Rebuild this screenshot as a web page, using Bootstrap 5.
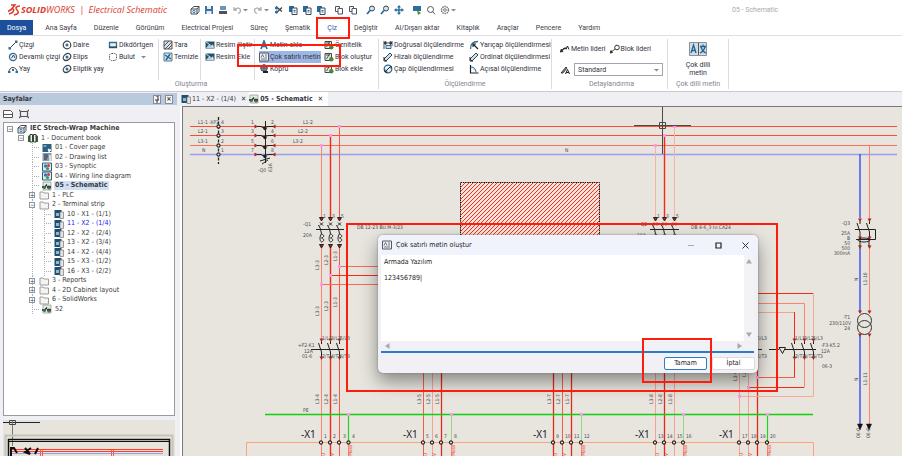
<!DOCTYPE html>
<html lang="tr">
<head>
<meta charset="utf-8">
<meta name="viewport" content="width=device-width, initial-scale=1">
<title>SOLIDWORKS Electrical Schematic</title>
<link href="https://cdn.jsdelivr.net/npm/bootstrap@5.3.0/dist/css/bootstrap.min.css" rel="stylesheet">
<style>
:root{--ui:Roboto,"Noto Sans",sans-serif;--tah:"DejaVu Sans Condensed","DejaVu Sans",sans-serif}
body{font:7px/10px var(--ui);color:#33333e;background:#fff;overflow:hidden}
button,select,textarea{font:inherit;color:inherit}
svg{display:block;flex:none}
.ic{width:10px;height:10px}
.car{width:7px;height:10px}
.titlebar{height:20px;padding:0 8px;position:relative}
.brand{font:italic 9px/18px "Open Sans",sans-serif;color:#dc3a2c;width:169px}
.brand .bar{margin:0 2px}
.qbtn{border:0;background:none;padding:0;line-height:0}
.doc-title{color:#a9a9b2;margin-left:275px}
.menu{height:16px;border-bottom:1px solid #dfdfe3}
.menu .nav-link{padding:3px 0 2px;margin-left:17px;color:#3c3c46;line-height:11px}
.menu .file{background:#1c4f9c;color:#fff;margin:0;padding:3px 7px 2px}
.menu .file+.nav-link{margin-left:12px}
.menu .active{color:#1e5fae}
.ribbon{height:56px;border-bottom:1px solid #c9c9cf}
.rgroup{border-right:1px solid #dcdce0;margin:3px 0 2px}
.rgroup .caption{line-height:9px;color:#85858f;text-align:center}
.rcols{height:41px}
.rcol{display:grid;grid-template-rows:repeat(3,12px);align-content:start;padding-left:4px}
.rcol+.rcol.cut{border-left:1px solid #dcdce0}
.rbtn{display:flex;align-items:center;gap:1px;border:0;background:none;padding:0;white-space:nowrap;text-align:left;line-height:12px}
.rbtn.on{background:#9db7e4;margin-right:1px}
.rbtn.big{line-height:8px;text-align:center}
.w46{width:46px}.w42{width:42px}.w50{width:50px}.w54{width:54px}.w58{width:58px}.w66{width:66px}.w86{width:86px}
.style-select{width:89px;height:13px;border:1px solid #a5a5ad;border-radius:0;background:#fff;padding:0 3px;appearance:none}
.side{width:180px;background:#f0eff3;font-family:var(--tah);color:#3a3a3a}
.side-head{height:12px;background:#b9c9de;margin:1px 3px 0 0;padding-left:3px;font-weight:bold}
.sqbtn{width:8px;height:9px;border:1px solid #858d99;background:#f5f5f5;padding:0;line-height:6px;font-size:7px}
.side-tools{height:17px;padding:0 3px;gap:6px}
.treebox{flex:1 1 0;min-height:0;margin:0 5px 0 3px;border:1px solid #9a9aa2;background:#fff}
.tree{height:190px;display:grid;grid-auto-rows:1fr;margin:1px 0 0;padding:0 0 0 3px;list-style:none;--dots:repeating-linear-gradient(#b0b0b4 0 1px,transparent 1px 2px)}
.tree li{display:flex;align-items:center;gap:3px;white-space:nowrap;min-height:0;line-height:9px}
.tree .l1{padding-left:11px}.tree .l2{padding-left:22px}
.tree .l2,.tree .leaf,.tree .l3{background:var(--dots) 25px 0/1px 100% no-repeat}
.tree .l3{padding-left:37px;background:var(--dots) 25px 0/1px 100% no-repeat,var(--dots) 37px 0/1px 100% no-repeat}
.tree .leaf{padding-left:25px}
.tree .leaf::before,.tree .l3::before{content:"";width:7px;border-top:1px dotted #b0b0b4}
.tree .pm{width:6px;height:6px;border:1px solid #8d96a3;background:#fff;line-height:3px;font-size:6px;text-align:center;margin-right:1px}
.tree .sel{background:#cfe0f6;font-weight:bold;padding:0 1px;margin-left:-1px}
.tree .now{color:#1a1aee}
.preview{height:36px;margin:4px 5px 0 3px;background:#e6e4dd}
.doctabs{height:14px;background:#f0eff3;font-family:var(--tah);padding-left:1px}
.doctabs .tab{display:flex;align-items:center;gap:1px;padding:0 3px 0 0;border:0;background:none}
.doctabs .tab.cur{background:#fff;font-weight:bold;padding-right:5px}
.canvas{flex:1 1 0;min-height:0;border-top:1px solid #77777d;border-left:1px solid #77777d;background:#e7e5de;overflow:hidden;margin-left:2px}
.dlg{left:195px;top:128px;width:380px;border-radius:5px;background:#f1f0f4;box-shadow:0 0 2px #777,0 8px 18px rgba(0,0,0,.42);font-family:var(--tah);color:#222}
.dlg-head{height:20px;padding:0 9px 0 4px;background:#f0f3fc;border-radius:5px 5px 0 0;font-size:7px}
.dlg-edit{margin:0 4px 0 3px;border-bottom:2px solid #2a7dc9}
.dlg-edit textarea{display:block;flex:1;height:86px;border:0;padding:3px;background:#fff;resize:none;line-height:8px;outline:0;overflow:hidden}
.vbar{width:10px;background:#f3f3f5;padding:4px 2px}
.hbar{height:10px;padding:0 12px 0 4px}
.dlg-foot{height:20px;padding:0 3px;gap:5px}
.dbtn{width:43px;height:13px;border:1px solid #dcdce0;border-radius:2px;background:#fff;padding:0;line-height:10px}
.dbtn.main{border-color:#2a7dc9}
.callout{position:absolute;border:2px solid #ff1c0c;pointer-events:none}
.c-tab{left:316px;top:17px;width:34px;height:22px}
.c-cmd{left:237px;top:44px;width:104px;height:23px}
.c-dlg{left:346px;top:223px;width:432px;height:169px}
.c-ok{left:642px;top:338px;width:70px;height:45px}
.sch text{font-family:var(--tah);font-size:5px;fill:#4a4a50}
.sch .x1{font:10px "Noto Sans",sans-serif;fill:#222}
.sch .rd text{fill:#f0402c}
</style>
<script src="https://cdn.jsdelivr.net/npm/bootstrap@5.3.0/dist/js/bootstrap.bundle.min.js"></script>
</head>
<body class="vh-100 d-flex flex-column position-relative">

<svg width="0" height="0" class="position-absolute" aria-hidden="true">
<defs>
<g id="cube" fill="none" stroke="#454c57"><path d="M1 4l3-2.500h5v5l-2 2.500M1 4h6v5H1zM7 4l2-2.500"/><circle cx="4" cy="6.500" r="1.200" stroke="#2a78b0"/></g>
<g id="save"><path d="M1 1h8v8H1z" fill="#3a729c"/><path d="M3 1h4v3H3zM2.500 6h5v3h-5z" fill="#e8eef3"/></g>
<g id="prn"><path d="M2 1h6v4H2z" fill="#6f95b5"/><path d="M1 6h8v3H1z" fill="#4a5260"/></g>
<g id="undo"><path d="M2 2v3h3M2.500 4.500C5 2 8.500 3 8.500 5.500 8.500 7 7.500 8 6 8.500" fill="none" stroke="#a9adb5" stroke-width="1.300"/></g>
<g id="caret"><path d="M1 4h5L3.500 6.500z" fill="#8a8a90"/></g>
<g id="cut"><path d="M2 1.500l6 5M2 8l6-5.500" stroke="#444" stroke-width="1.300"/><circle cx="2.500" cy="3" r="1.600" fill="#256b9f"/><circle cx="2.500" cy="7" r="1.600" fill="#256b9f"/></g>
<g id="copy"><path d="M1 1h5v6H1z" fill="#256b9f"/><path d="M4 3h5v6.500H4z" fill="#fff" stroke="#3d4756"/><path d="M5.500 5.500h2M5.500 7h2" stroke="#256b9f"/></g>
<g id="page2" fill="none" stroke="#4d5561"><path d="M1.500 1.500h4v5h-4z"/><path d="M4 3.500h4.500v5.500H4z" fill="#fff"/></g>
<g id="find"><circle cx="6" cy="3.500" r="2.500" fill="#d5e3ee" stroke="#345"/><path d="M4 5.500L1 9" stroke="#256b9f" stroke-width="1.800"/></g>
<g id="pan"><path d="M5 0l2 2.500H5.700V4.300H7.500V3L10 5 7.500 7V5.700H5.700V7.500H7L5 10 3 7.500h1.300V5.700H2.500V7L0 5l2.500-2v1.300h1.800V2.500H3z" fill="#2b6f9d"/></g>
<g id="screen"><path d="M1 1h8v5H1z" fill="#2b6f9d"/><path d="M5 5l4 3-3 2z" fill="#4b8f3c"/></g>
<g id="lens" fill="none" stroke="#555"><circle cx="4.500" cy="4.500" r="3"/><path d="M6.800 6.800L9 9.300"/></g>
<g id="gear" fill="none" stroke="#777"><circle cx="5" cy="5" r="3.500" stroke-dasharray="1.500 .7" stroke-width="1.500"/><circle cx="5" cy="5" r="1.300"/></g>
<g id="line"><path d="M2 8L8 2" stroke="#444"/><path d="M0.500 7h2.500v2.500H.5zM7 .5h2.500V3H7z" fill="#2b6f9d"/></g>
<g id="poly"><circle cx="5" cy="5" r="3.600" fill="#e9f1f7" stroke="#2b6f9d" stroke-width="1.200"/><path d="M3.500 6l2-3 1.500 3" fill="none" stroke="#444"/></g>
<g id="arc"><path d="M1 8a4 4.500 0 0 1 8 0" fill="none" stroke="#444"/><path d="M0 7h2.500v2H0zM7.500 7H10v2H7.500zM4 5h2v2H4z" fill="#2b6f9d"/></g>
<g id="circ"><circle cx="5" cy="5" r="3.800" fill="none" stroke="#3a4552" stroke-width="1.200"/><circle cx="5" cy="5" r="1.500" fill="#2b6f9d"/></g>
<g id="ell"><ellipse cx="5" cy="5" rx="4" ry="3" transform="rotate(-35 5 5)" fill="none" stroke="#3a4552" stroke-width="1.200"/><circle cx="5" cy="5" r="1.500" fill="#2b6f9d"/></g>
<g id="rect"><path d="M1.500 2.500h7v5h-7z" fill="#e9f1f7" stroke="#2b6f9d" stroke-width="1.300"/><path d="M1 7h8" stroke="#333"/></g>
<g id="cloud"><rect x="1.500" y="1.500" width="7" height="7" rx="2" fill="none" stroke="#555" stroke-dasharray="1.500 .8"/></g>
<g id="hatch"><path d="M1 1h8v8H1z" fill="#dde1e6" stroke="#4a525c"/><path d="M1 6l5-5M2 9l7-7M5 9l4-4" stroke="#4a525c"/></g>
<g id="clean"><path d="M1 1h8v8H1z" fill="#cfe0ec" stroke="#5c7890"/><path d="M2 3l6 4M3 8l4-6" stroke="#256b9f" stroke-width="1.500"/></g>
<g id="img"><path d="M0.500 1.500h9v7h-9z" fill="#24516f"/><path d="M1 8l3-3.500 2 2L8 4l1 4z" fill="#b9d3e4"/><path d="M1 2l7 5" stroke="#fff" stroke-width=".8"/></g>
<g id="ta"><path d="M2 9L5 1l3 8M3 6.500h4" fill="none" stroke="#2b6f9d" stroke-width="1.700"/></g>
<g id="mt"><path d="M.5 1h9v8h-9z" fill="#eceef2" stroke="#555c68"/><path d="M2 5.500L3.500 2.500 5 5.500M6 3h2M6 5h2M2 7h6" fill="none" stroke="#555c68" stroke-width=".8"/></g>
<g id="link"><circle cx="5" cy="4" r="3.300" fill="#8b9ba8" stroke="#35424d"/><path d="M2 4h6M5 1v6" stroke="#35424d" stroke-width=".7"/><path d="M4 8h5" stroke="#222" stroke-width="2"/></g>
<g id="blk"><path d="M1 1.500h6.500v7H1z" fill="#e3e6e2" stroke="#3f4a44"/><path d="M2.500 7l3-5M2 3h4" stroke="#333" stroke-width=".8"/><circle cx="7.300" cy="7.300" r="2.200" fill="#3f8b3a"/></g>
<g id="dim"><path d="M1 1v8M9 1v5M1 3h8M1 3l2-1.500v3zM9 3L7 1.500v3z" fill="#333" stroke="#333" stroke-width=".9"/><path d="M3 5.500h5v3H3z" fill="#cfe0ec" stroke="#2b6f9d"/></g>
<g id="dim2"><path d="M1 7l6-6 2 2-6 6z" fill="#cfe0ec" stroke="#2f4558"/><path d="M1 5v4h3" fill="none" stroke="#222"/></g>
<g id="dia"><circle cx="5" cy="5" r="3.800" fill="#e9f1f7" stroke="#2b6f9d" stroke-width="1.300"/><path d="M2 8l6-6M2 8V5.500M2 8h2.500M8 2v2.500" stroke="#222" fill="none"/></g>
<g id="rad"><path d="M1.500 9C1.500 4 4 1.500 9 1.500" fill="none" stroke="#2b6f9d" stroke-width="1.300"/><path d="M9 9L4 4M4 7V4h3" fill="none" stroke="#222" stroke-width="1.200"/></g>
<g id="ang"><path d="M1.500 1v8H9.500" fill="none" stroke="#222" stroke-width="1.200"/><path d="M2 3c3 0 5 2 5 5.500" fill="#cfe0ec" stroke="#2b6f9d"/></g>
<g id="ldr"><path d="M1 7l3-3h3M0 8l3-.5L1.500 5z" fill="#222" stroke="#222" stroke-width=".8"/><path d="M6 5.500L7.500 2 9 5.500" fill="none" stroke="#222"/></g>
<g id="bld"><circle cx="7" cy="3.500" r="2.300" fill="none" stroke="#333"/><path d="M0 9l5-4M0 9l2.500-.5L1 6.500z" fill="#222" stroke="#222" stroke-width=".8"/></g>
<g id="sty"><path d="M1 8l5-6 1 1-4 5z" fill="#7e8d99" stroke="#222" stroke-width=".8"/><path d="M5.500 9L7.500 4.500 9.500 9M6 7.500h3" fill="none" stroke="#222"/></g>
<g id="book"><path d="M0 3l2-1v7H0zM10 3L8 2v7h2z" fill="#2f6b37"/><path d="M2 1.500h2.500v7.500H2zM5.500 1.500H8v7.500H5.500z" fill="#f1f1ee" stroke="#3a3f3a"/></g>
<g id="cov"><path d="M.5 1h9v8h-9z" fill="#2a6080"/><path d="M1.500 3h3M6 6l3 1-2 2z" stroke="#fff" fill="#fff" stroke-width=".8"/></g>
<g id="lst"><path d="M.5 1h9v8h-9z" fill="#8a9aa8"/><path d="M2 3h4M2 5h4M2 7h3" stroke="#234"/><path d="M7 3h2v6H7z" fill="#ddd"/></g>
<g id="syn"><path d="M.5 1h9v8h-9z" fill="#dfeaf0" stroke="#2a6080"/><circle cx="3.500" cy="4" r="1.700" fill="#2b7fb8"/><circle cx="6.500" cy="3.500" r="1.500" fill="#d33"/><circle cx="5.500" cy="6.500" r="1.600" fill="#3a9a4a"/></g>
<g id="sc"><path d="M1 1h8v8H1z" fill="#e5e8e5" stroke="#8a8f8a" stroke-width=".7"/><path d="M0 6h3l2-2.500M5 6h4" stroke="#222" stroke-width="1.300" fill="none"/><circle cx="2.500" cy="6.500" r="1.500" fill="#2c7c46"/><circle cx="7" cy="6.500" r="1.500" fill="none" stroke="#1f4632"/></g>
<g id="tm"><path d="M.5 1h7v8h-7z" fill="#1f4f70"/><path d="M2 4h3v3H2z" fill="#8db9d3"/><path d="M6 3h3.500v6.500H6z" fill="#e3e3e0" stroke="#777" stroke-width=".7"/></g>
<g id="fold"><path d="M1 2h3l1 1h4.500v6H1z" fill="#f4f4f2" stroke="#9c9ca0"/></g>
<!-- schematic parts -->
<g id="pin"><path d="M-2-1.500h4L0 2z" fill="#b82018"/></g>
<g id="pole" fill="none" stroke="#222"><path d="M-1.500 4.500l3 3M1.500 4.500l-3 3M-3 7l2 4 1 5M0 16c3 1 3 3 0 4 3 1 3 3 0 4M0 24c-2-1-2-6 0-8" stroke-width="1"/><use href="#pin" y="1"/><use href="#pin" y="28"/></g>
<g id="kpole"><path d="M0 1v3M-3 3l3 9v6" fill="none" stroke="#222"/><use href="#pin"/><use href="#pin" y="18"/></g>
<g id="term"><circle r="1.600" fill="#e7e5de" stroke="#222" stroke-width="1.100"/></g>
<g id="tie"><path d="M-1.500-1.500h3v3h-3z" fill="#f79af0"/></g>
<g id="hp"><use href="#pin" transform="translate(-9) rotate(-90)"/><use href="#pin" transform="translate(9) rotate(90)"/><path d="M-8 0h4l5 3M8 0H4L-2 1" fill="none" stroke="#222"/><circle cy="2" r="1.700" fill="#222"/></g>
<pattern id="diag" width="4" height="4" patternUnits="userSpaceOnUse"><rect width="4" height="4" fill="#f7e3dc"/><path d="M-1 5L5-1M-1 1l2-2M3 5l2-2" stroke="#f5301c" stroke-width="1"/></pattern>
</defs>
</svg>

<header class="titlebar d-flex align-items-center">
  <svg width="13" height="15" viewBox="0 0 13 15" aria-hidden="true"><path d="M3 2h4L4 5.500C7 6 6 10 1 11M0 8.500L4 6M12 3C8 3 7 5 9 7s2 4-3 5" fill="none" stroke="#dc3a2c" stroke-width="1.500"/></svg>
  <div class="brand text-nowrap"><b>SOLID</b>WORKS<span class="bar"> | </span>Electrical Schematic</div>
  <div class="d-flex align-items-center gap-1">
    <button class="qbtn" aria-label="Proje"><svg class="ic"><use href="#cube"/></svg></button>
    <button class="qbtn" aria-label="Kaydet"><svg class="ic"><use href="#save"/></svg></button>
    <button class="qbtn" aria-label="Yazdır"><svg class="ic"><use href="#prn"/></svg></button>
    <button class="qbtn d-flex" aria-label="Geri al"><svg class="ic"><use href="#undo"/></svg><svg class="car"><use href="#caret"/></svg></button>
    <button class="qbtn d-flex" aria-label="Yinele"><svg class="ic" viewBox="-10 0 10 10"><use href="#undo" transform="scale(-1 1)"/></svg><svg class="car"><use href="#caret"/></svg></button>
    <button class="qbtn" aria-label="Kes"><svg class="ic"><use href="#cut"/></svg></button>
    <button class="qbtn" aria-label="Kopyala"><svg class="ic"><use href="#copy"/></svg></button>
    <button class="qbtn" aria-label="Çoklu kopyala"><svg class="ic"><use href="#copy"/></svg></button>
    <button class="qbtn" aria-label="Yapıştır"><svg class="ic"><use href="#copy"/></svg></button>
    <button class="qbtn ms-1" aria-label="Özel yapıştır"><svg class="ic"><use href="#page2"/></svg></button>
    <button class="qbtn" aria-label="Taşı"><svg class="ic"><use href="#page2"/></svg></button>
    <button class="qbtn ms-1" aria-label="Bul"><svg class="ic"><use href="#find"/></svg></button>
    <button class="qbtn" aria-label="Değiştir"><svg class="ic"><use href="#find"/></svg></button>
    <button class="qbtn" aria-label="Kaydır"><svg class="ic"><use href="#pan"/></svg></button>
    <button class="qbtn ms-1" aria-label="Ekran"><svg class="ic"><use href="#screen"/></svg></button>
    <button class="qbtn" aria-label="Yakınlaştır"><svg class="ic"><use href="#lens"/></svg></button>
    <button class="qbtn d-flex" aria-label="Ayarlar"><svg class="ic"><use href="#gear"/></svg><svg class="car"><use href="#caret"/></svg></button>
  </div>
  <div class="doc-title text-nowrap">05 - Schematic</div>
</header>

<nav class="menu d-flex text-nowrap" aria-label="Menü">
  <a class="nav-link file" href="#">Dosya</a><a class="nav-link" href="#">Ana Sayfa</a><a class="nav-link" href="#">Düzenle</a><a class="nav-link" href="#">Görünüm</a><a class="nav-link" href="#">Electrical Projesi</a><a class="nav-link" href="#">Süreç</a><a class="nav-link" href="#">Şematik</a><a class="nav-link active" href="#">Çiz</a><a class="nav-link" href="#">Değiştir</a><a class="nav-link" href="#">Al/Dışarı aktar</a><a class="nav-link" href="#">Kitaplık</a><a class="nav-link" href="#">Araçlar</a><a class="nav-link" href="#">Pencere</a><a class="nav-link" href="#">Yardım</a>
</nav>

<section class="ribbon d-flex">
  <div class="rgroup ps-1">
    <div class="rcols d-flex">
      <div class="rcol w54 ps-0 ms-1"><button class="rbtn"><svg class="ic"><use href="#line"/></svg>Çizgi</button><button class="rbtn"><svg class="ic"><use href="#poly"/></svg>Devamlı çizgi</button><button class="rbtn"><svg class="ic"><use href="#arc"/></svg>Yay</button></div>
      <div class="rcol w46 ps-0"><button class="rbtn"><svg class="ic"><use href="#circ"/></svg>Daire</button><button class="rbtn"><svg class="ic"><use href="#ell"/></svg>Elips</button><button class="rbtn"><svg class="ic"><use href="#ell"/></svg>Eliptik yay</button></div>
      <div class="rcol w50 ps-0"><button class="rbtn"><svg class="ic"><use href="#rect"/></svg>Dikdörtgen</button><button class="rbtn"><svg class="ic"><use href="#cloud"/></svg>Bulut<svg class="car ms-1"><use href="#caret"/></svg></button></div>
      <div class="rcol w42 cut"><button class="rbtn"><svg class="ic"><use href="#hatch"/></svg>Tara</button><button class="rbtn"><svg class="ic"><use href="#clean"/></svg>Temizle</button></div>
      <div class="rcol w54 cut"><button class="rbtn"><svg class="ic"><use href="#img"/></svg>Resim iliştir</button><button class="rbtn"><svg class="ic"><use href="#img"/></svg>Resim Ekle</button></div>
      <div class="rcol w66 cut"><button class="rbtn"><svg class="ic"><use href="#ta"/></svg>Metin ekle</button><button class="rbtn on"><svg class="ic"><use href="#mt"/></svg>Çok satırlı metin</button><button class="rbtn"><svg class="ic"><use href="#link"/></svg>Köprü</button></div>
      <div class="rcol w58"><button class="rbtn"><svg class="ic"><use href="#blk"/></svg>Öznitelik</button><button class="rbtn"><svg class="ic"><use href="#blk"/></svg>Blok oluştur</button><button class="rbtn"><svg class="ic"><use href="#blk"/></svg>Blok ekle</button></div>
    </div>
    <div class="caption">Oluşturma</div>
  </div>
  <div class="rgroup">
    <div class="rcols d-flex">
      <div class="rcol w86"><button class="rbtn"><svg class="ic"><use href="#dim"/></svg>Doğrusal ölçülendirme</button><button class="rbtn"><svg class="ic"><use href="#dim2"/></svg>Hizalı ölçülendirme</button><button class="rbtn"><svg class="ic"><use href="#dia"/></svg>Çap ölçülendirmesi</button></div>
      <div class="rcol w86"><button class="rbtn"><svg class="ic"><use href="#rad"/></svg>Yarıçap ölçülendirmesi</button><button class="rbtn"><svg class="ic"><use href="#dim2"/></svg>Ordinat ölçülendirmesi</button><button class="rbtn"><svg class="ic"><use href="#ang"/></svg>Açısal ölçülendirme</button></div>
    </div>
    <div class="caption">Ölçülendirme</div>
  </div>
  <div class="rgroup ps-2 pe-1">
    <div class="rcols d-flex flex-column justify-content-center gap-2">
      <div class="d-flex gap-1"><button class="rbtn"><svg class="ic"><use href="#ldr"/></svg>Metin lideri</button><button class="rbtn"><svg class="ic"><use href="#bld"/></svg>Blok lideri</button></div>
      <div class="d-flex align-items-center gap-1 position-relative"><svg class="ic"><use href="#sty"/></svg><select class="style-select" aria-label="Ölçü stili"><option>Standard</option></select><svg class="ic position-absolute end-0"><use href="#caret"/></svg></div>
    </div>
    <div class="caption">Detaylandırma</div>
  </div>
  <div class="rgroup px-2">
    <div class="rcols d-flex justify-content-center"><button class="rbtn big flex-column justify-content-center"><svg width="18" height="14" viewBox="0 0 18 14"><path d="M.5.5h17v13H.5z" fill="#d3dbe4" stroke="#8a9099"/><path d="M9.500 1v12" stroke="#555"/><path d="M2 11l2.500-8L7 11M3 8.500h3.500M11 4.500h6M14 2.500v2M12 5c1 3 2 5 5 6M16 5c-1 3-2 5-5 6" fill="none" stroke="#1f6496" stroke-width="1.300"/></svg><span class="mt-1">Çok dilli<br>metin</span></button></div>
    <div class="caption">Çok dilli metin</div>
  </div>
</section>

<div class="d-flex flex-grow-1" style="min-height:0">
  <aside class="side d-flex flex-column flex-shrink-0">
    <div class="side-head d-flex align-items-center"><span class="me-auto">Sayfalar</span><button class="sqbtn me-1" aria-label="Sabitle"><svg width="6" height="7"><path d="M1 4h4M2 0h2v4M3 4v3" stroke="#333" fill="none"/></svg></button><button class="sqbtn me-1" aria-label="Kapat">×</button></div>
    <div class="side-tools d-flex align-items-center"><button class="qbtn" aria-label="Sayfa"><svg class="ic"><path d="M.5 1.500h7l2 2v5h-9zM0 5.500h10" fill="#fff" stroke="#555"/></svg></button><button class="qbtn" aria-label="Kırp"><svg class="ic"><path d="M1.500 2.500h7v5h-7zM0 1l1.500 1.500M10 1L8.500 2.500M0 9l1.500-1.500M10 9L8.500 7.500" fill="none" stroke="#555" stroke-width="1.200"/></svg></button></div>
    <div class="treebox">
      <ul class="tree">
        <li><span class="pm">−</span><svg class="ic"><use href="#cube"/></svg><b>IEC Strech-Wrap Machine</b></li>
        <li class="l1"><span class="pm">−</span><svg class="ic"><use href="#book"/></svg>1 - Document book</li>
        <li class="leaf"><svg class="ic"><use href="#cov"/></svg>01 - Cover page</li>
        <li class="leaf"><svg class="ic"><use href="#lst"/></svg>02 - Drawing list</li>
        <li class="leaf"><svg class="ic"><use href="#syn"/></svg>03 - Synoptic</li>
        <li class="leaf"><svg class="ic"><use href="#syn"/></svg>04 - Wiring line diagram</li>
        <li class="leaf"><svg class="ic"><use href="#sc"/></svg><span class="sel">05 - Schematic</span></li>
        <li class="l2"><span class="pm">+</span><svg class="ic"><use href="#fold"/></svg>1 - PLC</li>
        <li class="l2"><span class="pm">−</span><svg class="ic"><use href="#fold"/></svg>2 - Terminal strip</li>
        <li class="l3"><svg class="ic"><use href="#tm"/></svg>10 - X1 - (1/1)</li>
        <li class="l3"><svg class="ic"><use href="#tm"/></svg><span class="now">11 - X2 - (1/4)</span></li>
        <li class="l3"><svg class="ic"><use href="#tm"/></svg>12 - X2 - (2/4)</li>
        <li class="l3"><svg class="ic"><use href="#tm"/></svg>13 - X2 - (3/4)</li>
        <li class="l3"><svg class="ic"><use href="#tm"/></svg>14 - X2 - (4/4)</li>
        <li class="l3"><svg class="ic"><use href="#tm"/></svg>15 - X3 - (1/2)</li>
        <li class="l3"><svg class="ic"><use href="#tm"/></svg>16 - X3 - (2/2)</li>
        <li class="l2"><span class="pm">+</span><svg class="ic"><use href="#fold"/></svg>3 - Reports</li>
        <li class="l2"><span class="pm">+</span><svg class="ic"><use href="#fold"/></svg>4 - 2D Cabinet layout</li>
        <li class="l2"><span class="pm">+</span><svg class="ic"><use href="#fold"/></svg>6 - SolidWorks</li>
        <li class="leaf"><svg class="ic"><use href="#sc"/></svg>52</li>
      </ul>
    </div>
    <div class="preview overflow-hidden">
      <svg width="172" height="36"><path d="M0 2.500h37" stroke="#223"/><path d="M9.500 0v26" stroke="#777"/><path d="M6.500.5h6v4h-6z" fill="none" stroke="#444"/><path d="M2.500 36V15.500h167V36" fill="none" stroke="#c5c2b8" stroke-width="2"/><path d="M5.500 36V19.500h161V36" fill="none" stroke="#111" stroke-width="1.500"/><path d="M6 21.500h160" stroke="#111"/><path d="M8 29.500h152M8 31.500h152" stroke="#ff3a26"/><path d="M8 33.500h152" stroke="#9b9be8"/><path d="M8 36v-8h3l3 5M22 28l5 6-5-2 6-4M32 34l3-6" stroke="#111" stroke-width="2" fill="none"/><path d="M37.500 30v6M39.500 30v6M108.500 30v6M110.500 30v6" stroke="#ff5a46"/></svg>
    </div>
  </aside>

  <main class="d-flex flex-column flex-grow-1" style="min-width:0">
    <div class="doctabs d-flex">
      <button class="tab"><svg class="ic"><use href="#tm"/></svg>11 - X2 - (1/4)<span class="ms-1">✕</span></button>
      <button class="tab cur"><svg class="ic"><use href="#sc"/></svg>05 - Schematic<span class="ms-1">✕</span></button>
    </div>
    <div class="canvas position-relative">
      <svg class="sch position-absolute" width="100%" height="100%" aria-label="Şema">
      <g transform="translate(-183 -107)">
        <path d="M190 126.500H897M190 135.500H897" stroke="#ff4a35"/><path d="M190 145.500H897" stroke="#ff6e5c"/><path d="M190 154.500H897" stroke="#9c9cf0" stroke-width="1.500"/>
        <path d="M218.500 117v47" stroke="#222" stroke-dasharray="3 1.500" stroke-width="1.300"/>
        <use href="#term" x="218.500" y="126.500"/><use href="#term" x="218.500" y="135.500"/><use href="#term" x="218.500" y="145.500"/><use href="#term" x="218.500" y="154.500"/>
        <text x="198" y="124">L1-1</text><text x="209" y="124">-XP2</text><text x="198" y="133">L2-1</text><text x="198" y="143">L3-1</text><text x="202" y="152">N</text>
        <text x="221" y="124">4</text><text x="221" y="133">3</text><text x="221" y="143">2</text><text x="221" y="152">1</text>
        <path d="M265.500 121v42M260 161l10-3M262 164l6-4" stroke="#222"/>
        <use href="#hp" x="265" y="126.500"/><use href="#hp" x="265" y="135.500"/><use href="#hp" x="265" y="145.500"/><use href="#hp" x="265" y="154.500"/>
        <text x="251" y="124">1</text><text x="271" y="124">2</text><text x="251" y="133">3</text><text x="271" y="133">4</text><text x="251" y="143">5</text><text x="271" y="143">6</text><text x="251" y="152">7</text><text x="271" y="152">8</text>
        <text x="258" y="172">-Q0</text><text transform="translate(272 172) rotate(-90)">63A</text>
        <text x="303" y="124">L1-2</text><text x="298" y="133">L2-2</text><text x="293" y="143">L3-2</text><text x="565" y="152">N</text>
        <!-- feeder 1 -->
        <path d="M321.500 145v74M321.500 247v93M321.500 358v98" stroke="#ff8270"/><path d="M330.500 135v84M330.500 247v93M330.500 358v98" stroke="#f82818" stroke-width="1.400"/><path d="M339.500 126v93M339.500 247v93M339.500 358v98" stroke="#ff5444"/>
        <path d="M339 266.500h60M321 284.500h60" stroke="#ff6555"/><path d="M330 275.500h60" stroke="#f82818"/>
        <use href="#pole" x="321.500" y="218"/><use href="#pole" x="330.500" y="218"/><use href="#pole" x="339.500" y="218"/><path d="M316 229.500h28M311 349.500h33" stroke="#222"/>
        <use href="#kpole" x="321.500" y="340"/><use href="#kpole" x="330.500" y="340"/><use href="#kpole" x="339.500" y="340"/>
        <text x="303" y="226">-Q1</text><text x="303" y="237">20A</text><text x="323" y="218">1</text><text x="332" y="218">3</text><text x="341" y="218">5</text>
        <text x="298" y="347">+F2-K1</text><text x="304" y="353">12A</text><text x="302" y="358">01-6</text>
        <text x="322" y="340">1/L1</text><text x="331" y="340">3/L2</text><text x="340" y="340">5/L3</text><text x="322" y="358">2/T1</text><text x="331" y="358">4/T2</text><text x="340" y="358">6/T3</text>
        <text transform="translate(319 270) rotate(-90)">L3-3</text><text transform="translate(328 265) rotate(-90)">L2-3</text><text transform="translate(337 261) rotate(-90)">L1-3</text>
        <text transform="translate(319 316) rotate(-90)">L3-3</text><text transform="translate(328 311) rotate(-90)">L2-3</text><text transform="translate(337 307) rotate(-90)">L1-3</text>
        <text transform="translate(319 404) rotate(-90)">L3-4</text><text transform="translate(328 404) rotate(-90)">L2-4</text><text transform="translate(337 404) rotate(-90)">L1-4</text>
        <text transform="translate(421 404) rotate(-90)">L3-5</text><text transform="translate(430 404) rotate(-90)">L2-5</text><text transform="translate(439 404) rotate(-90)">L1-5</text>
        <text transform="translate(551 404) rotate(-90)">L3-7</text><text transform="translate(560 404) rotate(-90)">L2-7</text><text transform="translate(569 404) rotate(-90)">L1-7</text>
        <text transform="translate(653 404) rotate(-90)">L3-8</text><text transform="translate(662 404) rotate(-90)">L2-8</text><text transform="translate(672 404) rotate(-90)">L1-8</text>
        <text transform="translate(737 381) rotate(-90)">L3-9</text><text transform="translate(746 377) rotate(-90)">L2-9</text>
        <text x="357" y="229">DB 12-23 BU.M-3/23</text><text x="691" y="229">DB 4-6_3 to CA24</text>
        <!-- load block -->
        <rect x="460.500" y="182.500" width="139" height="60" fill="url(#diag)" stroke="#111" stroke-dasharray="1.500 .8"/>
        <!-- feeder 2 -->
        <path d="M655.500 145v74M674.500 126v93" stroke="#f4b3a8"/><path d="M664.500 135v84" stroke="#f82818" stroke-width="1.400"/>
        <use href="#pole" x="655.500" y="218"/><use href="#pole" x="664.500" y="218"/><use href="#pole" x="674.500" y="218"/><path d="M650 229.500h29" stroke="#222"/>
        <text x="639" y="226">-Q2</text><text x="637" y="237">10A</text><text x="657" y="218">1</text><text x="666" y="218">3</text><text x="676" y="218">5</text>
        <!-- lower drops -->
        <path d="M246.500 456v-13.500h567V456" fill="none" stroke="#ffa27c"/>
        <path d="M432.500 370v86M655.500 370v86M674.500 370v86M739.500 370v86M748.500 370v86" stroke="#f8a093"/><path d="M423.500 370v86M562.500 370v86" stroke="#f85a48"/><path d="M441.500 370v86M553.500 370v86M571.500 370v86M664.500 370v86M757.500 340v116" stroke="#e8281a" stroke-width="1.300"/>
        <path d="M265 414.500h548" stroke="#10d010" stroke-width="1.500"/><path d="M348.500 414v28M767.500 414v28" stroke="#22d322" stroke-width="1.200"/><path d="M451.500 414v28M581.500 414v28M683.500 414v28" stroke="#8cdd85"/>
        <path d="M348.500 444v12M451.500 444v12M581.500 444v12M683.500 444v12M767.500 444v12" stroke="#ff8270"/>
        <text x="303" y="412">PE</text>
        <text class="x1" x="301" y="438">-X1</text><text class="x1" x="403" y="438">-X1</text><text class="x1" x="533" y="438">-X1</text><text class="x1" x="635" y="438">-X1</text><text class="x1" x="719" y="438">-X1</text>
        <use href="#term" x="321" y="442.500"/><use href="#term" x="330" y="442.500"/><use href="#term" x="339" y="442.500"/><use href="#term" x="348.500" y="442.500"/>
        <use href="#term" x="423" y="442.500"/><use href="#term" x="432" y="442.500"/><use href="#term" x="441" y="442.500"/><use href="#term" x="451" y="442.500"/>
        <use href="#term" x="553" y="442.500"/><use href="#term" x="562" y="442.500"/><use href="#term" x="571" y="442.500"/><use href="#term" x="581" y="442.500"/>
        <use href="#term" x="655" y="442.500"/><use href="#term" x="664" y="442.500"/><use href="#term" x="674" y="442.500"/><use href="#term" x="683" y="442.500"/>
        <use href="#term" x="739" y="442.500"/><use href="#term" x="748" y="442.500"/><use href="#term" x="757" y="442.500"/><use href="#term" x="767" y="442.500"/>
        <text x="324" y="438">1</text><text x="333" y="438">2</text><text x="343" y="438">3</text><text x="352" y="438">4</text>
        <text x="426" y="438">5</text><text x="435" y="438">6</text><text x="444" y="438">7</text><text x="454" y="438">8</text>
        <text x="556" y="438">9</text><text x="565" y="438">10</text><text x="574" y="438">11</text><text x="584" y="438">12</text>
        <text x="658" y="438">13</text><text x="667" y="438">14</text><text x="677" y="438">15</text><text x="686" y="438">16</text>
        <text x="742" y="438">17</text><text x="751" y="438">18</text><text x="760" y="438">19</text><text x="770" y="438">20</text>
        <g class="rd"><text transform="translate(325 456) rotate(-90)">U</text><text transform="translate(334 456) rotate(-90)">V</text><text transform="translate(352 456) rotate(-90)">Mass</text><text transform="translate(427 456) rotate(-90)">U</text><text transform="translate(436 456) rotate(-90)">V</text><text transform="translate(455 456) rotate(-90)">Mass</text><text transform="translate(557 456) rotate(-90)">U</text><text transform="translate(566 456) rotate(-90)">V</text><text transform="translate(585 456) rotate(-90)">Mass</text><text transform="translate(659 456) rotate(-90)">U</text><text transform="translate(668 456) rotate(-90)">V</text><text transform="translate(687 456) rotate(-90)">Mass</text><text transform="translate(743 456) rotate(-90)">U</text><text transform="translate(752 456) rotate(-90)">V</text><text transform="translate(771 456) rotate(-90)">Mass</text></g>
        <!-- reversing contactor -->
        <path d="M750 293.500h63.500" stroke="#f82818"/><path d="M750 303.500h54.500V340M804.500 358v29.500" fill="none" stroke="#ff8270"/><path d="M813.500 293v47M813.500 358v38.500H739" fill="none" stroke="#f6a99c"/><path d="M750 312.500h44" stroke="#f8a093"/><path d="M794.500 312v28M794.500 358v19M804 387.500h-56" stroke="#f82818"/><path d="M757 377.500h38" stroke="#f85a48"/>
        <use href="#kpole" x="794.500" y="340"/><use href="#kpole" x="804.500" y="340"/><use href="#kpole" x="813.500" y="340"/><path d="M769 349.500h10M785 349.500h31M757 349.500h5M779 347.500h6.500l-3 6z" fill="none" stroke="#222"/>
        <text x="795" y="340">1/L1</text><text x="804" y="340">3/L2</text><text x="813" y="340">5/L3</text><text x="795" y="358">2/T1</text><text x="804" y="358">4/T2</text><text x="813" y="358">6/T3</text><text x="757" y="340">5/L3</text><text x="757" y="358">6/T3</text>
        <text x="821" y="347">-F3-K5.2</text><text x="821" y="353">12A</text><text x="822" y="368">06-3</text>
        <!-- control transformer branch -->
        <path d="M860 154v64M860 247v65M860 335v92" stroke="#2a42ee" stroke-width="1.300"/><path d="M869.500 145v74M869.500 247v65M869.500 335v92" stroke="#ff8270"/>
        <use href="#kpole" x="860" y="220"/><use href="#kpole" x="869.500" y="220"/><use href="#pin" x="860" y="247"/><use href="#pin" x="869.500" y="247"/>
        <path d="M855 229.500h20.500v10H856M860 238v8M869 238v8" fill="none" stroke="#222"/><ellipse cx="864" cy="240" rx="6" ry="2" fill="none" stroke="#222"/>
        <use href="#pin" x="860" y="312"/><use href="#pin" x="869.500" y="312"/><use href="#pin" x="860" y="335"/><use href="#pin" x="869.500" y="335"/>
        <circle cx="864.500" cy="320.500" r="7" fill="none" stroke="#333"/><circle cx="864.500" cy="327.500" r="7" fill="none" stroke="#333"/>
        <g text-anchor="end"><text x="850" y="225">-Q3</text><text x="850" y="235">25A</text><text x="850" y="240">B</text><text x="850" y="245">50</text><text x="850" y="250">500</text><text x="850" y="255">300mA</text><text x="850" y="319">-T1</text><text x="851" y="325">230/110V</text><text x="850" y="330">24</text></g>
        <text transform="translate(858 281) rotate(-90)">N</text><text transform="translate(867 285) rotate(-90)">L1-10</text><text transform="translate(858 381) rotate(-90)">N</text><text transform="translate(867 385) rotate(-90)">L1-11</text>
        <path d="M857.500 424h5l-2.500 6zM866.500 424h5l-2.500 6z" fill="#111" stroke="#111" stroke-width=".5"/>
        <text transform="translate(860 438) rotate(-90)">06-0</text><text transform="translate(870 438) rotate(-90)">06-0</text>
        <!-- connection nodes -->
        <use href="#tie" x="339.500" y="126.500"/><use href="#tie" x="330.500" y="135.500"/><use href="#tie" x="321.500" y="145.500"/><use href="#tie" x="339.500" y="266.500"/><use href="#tie" x="330.500" y="275.500"/><use href="#tie" x="321.500" y="284.500"/>
        <use href="#tie" x="655.500" y="145.500"/><use href="#tie" x="664.500" y="135.500"/><use href="#tie" x="674.500" y="126.500"/><use href="#tie" x="739.500" y="396.500"/><use href="#tie" x="748.500" y="387.500"/><use href="#tie" x="757.500" y="377.500"/>
        <use href="#tie" x="348.500" y="414.500"/><use href="#tie" x="451.500" y="414.500"/><use href="#tie" x="581.500" y="414.500"/><use href="#tie" x="683.500" y="414.500"/><use href="#tie" x="767.500" y="414.500"/>
        <path d="M662.500 107v47M634 125.500h57M659.500 122.500h6v6h-6z" fill="none" stroke="#4a4a4a"/>
      </g>
      </svg>

      <div class="dlg position-absolute" role="dialog" aria-labelledby="dlgTitle">
        <div class="dlg-head d-flex align-items-center">
          <svg class="ic"><use href="#mt"/></svg><span id="dlgTitle" class="ms-1 me-auto">Çok satırlı metin oluştur</span>
          <button class="qbtn" aria-label="Simge durumuna küçült"><svg width="7" height="7"><path d="M0 3.500h6" stroke="#aaa"/></svg></button>
          <button class="qbtn mx-3 px-1" aria-label="Ekranı kapla"><svg width="7" height="7"><path d="M1 1h5v5H1z" fill="none" stroke="#222" stroke-width="1.200"/></svg></button>
          <button class="qbtn" aria-label="Kapat"><svg width="7" height="7"><path d="M.5.5l6 6M6.500.5l-6 6" stroke="#333"/></svg></button>
        </div>
        <div class="dlg-edit">
          <div class="d-flex"><textarea aria-label="Metin">Armada Yazılım

123456789|</textarea><div class="vbar d-flex flex-column justify-content-between"><svg width="6" height="5"><path d="M0 4.500h6L3 0z" fill="#aaaaae"/></svg><svg width="6" height="5"><path d="M0 .5h6L3 5z" fill="#aaaaae"/></svg></div></div>
          <div class="hbar d-flex align-items-center justify-content-between"><svg width="5" height="6"><path d="M4.500 0v6L0 3z" fill="#aaaaae"/></svg><svg width="5" height="6"><path d="M.5 0v6L5 3z" fill="#aaaaae"/></svg></div>
        </div>
        <div class="dlg-foot d-flex align-items-center justify-content-end"><button class="dbtn main">Tamam</button><button class="dbtn">İptal</button></div>
      </div>
    </div>
  </main>
</div>

<div class="callout c-tab"></div>
<div class="callout c-cmd"></div>
<div class="callout c-dlg"></div>
<div class="callout c-ok"></div>
</body>
</html>
